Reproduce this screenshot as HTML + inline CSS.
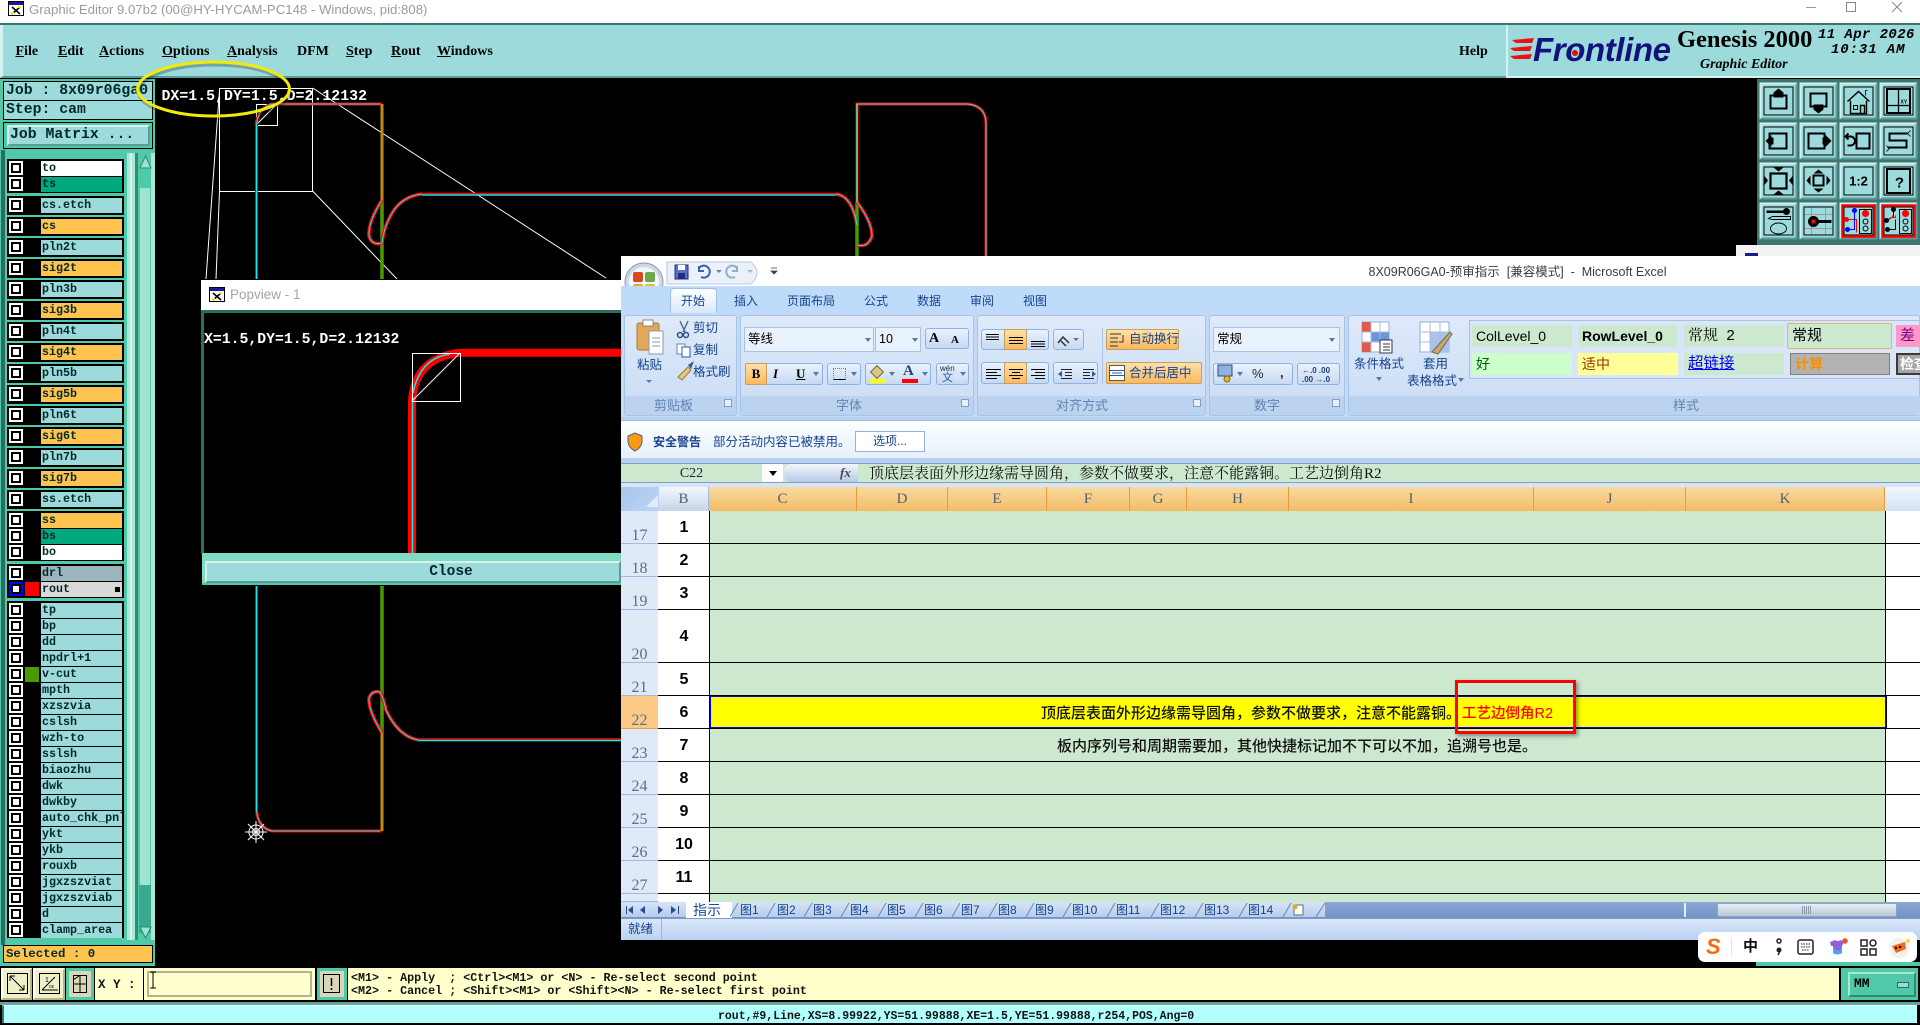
<!DOCTYPE html>
<html><head><meta charset="utf-8"><title>Graphic Editor</title>
<style>
html,body{margin:0;padding:0;width:1920px;height:1023px;overflow:hidden;background:#000}
div,span,b,svg{position:absolute;white-space:pre}
u,em{position:static}
body{font-family:"Liberation Sans","Noto Sans CJK SC",sans-serif;font-size:12px;color:#000}
.m{font-family:"Liberation Serif",serif;font-weight:bold;font-size:14px;top:42.500px;line-height:17px;color:#000}
.mono{font-family:"Liberation Mono",monospace;font-weight:bold}
.f{background:#000;left:7px;width:117px}
.y{left:0;width:124px;height:15px}
.y i{position:absolute;left:9px;top:0;width:14px;height:14px;background:#fff;box-sizing:border-box;padding:0}
.y i:before{content:"";position:absolute;left:2px;top:2px;width:10px;height:10px;background:#000}
.y i:after{content:"";position:absolute;left:4px;top:4px;width:6px;height:6px;background:#fff}
.y b{left:41px;width:80px;height:15px;padding-left:1px;overflow:hidden;font-family:"Liberation Mono",monospace;font-size:11.700px;line-height:15px;font-weight:bold;color:#03282a;background:#9ddadb}
.y b.o{background:#ffc44f}.y b.w{background:#fff}.y b.g{background:#00a880}
.grp{background:linear-gradient(#dfeafa,#c9dcf5);border:1px solid #a6c3e8;border-radius:3px;box-sizing:border-box;top:315px;height:101px}
.lab{top:396px;height:19px;background:#bcd3ef}
.gl{top:398px;line-height:16px;font-size:13px;color:#5f82b3}
.rb{color:#15428b;font-size:12px;line-height:16px}
.tab{top:293px;font-size:12px;line-height:16px;color:#15428b}
.btn{background:linear-gradient(#eaf2fd,#c6d9f2);border:1px solid #8db2e3;border-radius:3px;box-sizing:border-box}
.or{background:linear-gradient(#fde0a8,#fbb95f);border:1px solid #c9a05a;border-radius:2px;box-sizing:border-box}
.cb{background:#e9f1fc;border:1px solid #a9c3e6;box-sizing:border-box}
.st{background:#cce8cf;height:22px;line-height:22px;font-size:14px;box-sizing:border-box;padding-left:4px}
.ch{top:487px;height:24px;background:linear-gradient(#f9dba0,#f4bb66);border-right:1px solid #e89a3c;box-sizing:border-box;text-align:center;font-family:"Liberation Serif",serif;font-size:15px;line-height:24px;color:#4e5f72}
.rh{left:621px;width:37px;background:#dfe9f7;border-bottom:1px solid #9fbce0;box-sizing:border-box;font-family:"Liberation Serif",serif;font-size:16px;color:#5c6f85;text-align:center}
.rh span{left:0;width:37px;bottom:-2px;line-height:19px}
.n{left:659px;width:50px;text-align:center;font-weight:bold;font-size:16px;line-height:20px;color:#000;margin-top:1px}
.hl{left:658px;width:1262px;height:1px;background:#000}
.sh{top:903px;font-size:12px;line-height:15px;color:#15428b}
.tri{width:0;height:0;border:3px solid transparent;border-top:4px solid #55789f}
.dl{width:8px;height:8px;top:399px;border:1px solid #7f9fc9;box-sizing:border-box;background:#e6effb}
</style></head><body>

<!-- title bar -->
<div style="left:0;top:0;width:1920px;height:23px;background:#fff"></div>
<svg style="left:8px;top:1px" width="16" height="15" viewBox="0 0 16 15"><rect x=".5" y=".5" width="15" height="14" fill="#fff" stroke="#000"/><rect x="1" y="1" width="14" height="3" fill="#1a1a90"/><path d="M4 6l8 7M12 6l-8 7" stroke="#000" stroke-width="1.500"/><path d="M3 12h3M10 6h3" stroke="#ee0" stroke-width="2"/></svg>
<div style="left:29px;top:1px;line-height:18px;font-size:13.200px;color:#9b9b9b">Graphic Editor 9.07b2 (00@HY-HYCAM-PC148 - Windows, pid:808)</div>
<svg style="left:1800px;top:0" width="120" height="20" viewBox="0 0 120 20"><path d="M6 7.500h10" stroke="#999"/><rect x="46.500" y="2.500" width="9" height="9" fill="none" stroke="#888"/><path d="M92 2l10 10M102 2l-10 10" stroke="#888"/></svg>

<!-- menu panel -->
<div style="left:0;top:23px;width:1920px;height:2px;background:#3f7570"></div>
<div style="left:0;top:25px;width:1506px;height:53px;background:#9ddadb;border-left:3px solid #d6f2ee;border-bottom:2px solid #5d9b98;box-sizing:border-box"></div>
<div style="left:1506px;top:25px;width:2px;height:53px;background:#d6f2ee"></div>
<div class="m" style="left:15.500px"><u>F</u>ile</div>
<div class="m" style="left:58px"><u>E</u>dit</div>
<div class="m" style="left:99px"><u>A</u>ctions</div>
<div class="m" style="left:162px"><u>O</u>ptions</div>
<div class="m" style="left:227px"><u>A</u>nalysis</div>
<div class="m" style="left:297px">DFM</div>
<div class="m" style="left:346px"><u>S</u>tep</div>
<div class="m" style="left:391px"><u>R</u>out</div>
<div class="m" style="left:437px"><u>W</u>indows</div>
<div class="m" style="left:1459px">Help</div>

<!-- logo panel -->
<div style="left:1508px;top:25px;width:412px;height:53px;background:#9ddadb;border-bottom:2px solid #d6f2ee;box-sizing:border-box"></div>
<svg style="left:1510px;top:36px" width="30" height="28" viewBox="0 0 30 28"><path d="M2 4l22-2-2 5H6zM0 12l22-2-2 5H4zM0 20l22-2-2 5H4z" fill="#f01010"/></svg>
<div style="left:1533px;top:31px;font:italic bold 33px/38px 'Liberation Sans',sans-serif;color:#12127c;letter-spacing:-.4px">Frontline</div>
<svg style="left:1563px;top:41px" width="24" height="24"><circle cx="12" cy="12" r="3" fill="#e01010"/></svg>
<div style="left:1677px;top:25px;font:bold 24.500px/30px 'Liberation Serif',serif;color:#000">Genesis 2000</div>
<div style="left:1700px;top:56px;font:italic bold 14px/18px 'Liberation Serif',serif;color:#000">Graphic Editor</div>
<div style="left:1818px;top:27px;font:italic bold 14px/16px 'Liberation Mono',monospace;color:#000;letter-spacing:.4px">11 Apr 2026</div>
<div style="left:1831px;top:42px;font:italic bold 14px/16px 'Liberation Mono',monospace;color:#000;letter-spacing:.9px">10:31 AM</div>

<!-- canvas -->
<svg style="left:155px;top:79px" width="1605" height="890" viewBox="155 79 1605 890" fill="none">
<g stroke="#fff" stroke-width="1">
<rect x="219.500" y="88.500" width="93" height="103"/>
<rect x="256.500" y="104.500" width="21" height="21"/>
<path d="M256 125L277 104M219.500 90L206 279M219.500 191L216 279M312.600 191L397 279M312.600 88L606 278"/>
</g>
<path d="M256.500 125V810Q258 828 272 831H382" stroke="#ff0000" stroke-width="3"/>
<path d="M256 125Q258 108 272 104H382" stroke="#ff0000" stroke-width="3"/>
<path d="M382 104V200" stroke="#c08a10" stroke-width="3"/>
<path d="M382 200V300M382 560V733" stroke="#4a9a00" stroke-width="3.500"/>
<path d="M382 733V831" stroke="#c08a10" stroke-width="3"/>
<path d="M382 200Q368 222 369 236Q372 246 382 243Q384 225 394 210Q404 196 422 194" stroke="#ff0000" stroke-width="3.500"/>
<path d="M422 193.500H836" stroke="#ff0000" stroke-width="1.500"/>
<path d="M422 195H836" stroke="#19e6e6" stroke-width="1.500"/>
<path d="M836 194Q852 196 857 225" stroke="#ff0000" stroke-width="3.500"/>
<path d="M382 733Q368 710 369 698Q372 690 380 692Q384 700 386 710Q398 736 418 740" stroke="#ff0000" stroke-width="3.500"/>
<path d="M418 739H625" stroke="#ff0000" stroke-width="1.500"/>
<path d="M418 740.500H625" stroke="#19e6e6" stroke-width="1.500"/>
<path d="M857 202V104H968Q985 106 986 122V260" stroke="#ff0000" stroke-width="3"/>
<path d="M857 104V202" stroke="#c08a10" stroke-width="2"/>
<path d="M857 202V260" stroke="#4a9a00" stroke-width="3.500"/>
<path d="M857 202Q872 222 872 236Q868 248 857 245" stroke="#ff0000" stroke-width="3.500"/>
<g stroke="#19e6e6" stroke-width="1">
<path d="M256.500 125V810Q258 828 272 831H380M256.500 125Q258 108 272 104H380"/>
<path d="M382 200Q368 222 369 236Q372 246 382 243Q384 225 394 210Q404 196 422 194"/>
<path d="M836 194Q852 196 857 225"/>
<path d="M382 733Q368 710 369 698Q372 690 380 692Q384 700 386 710Q398 736 418 740"/>
<path d="M857 202V104H968Q985 106 986 122V260M857 202Q872 222 872 236Q868 248 857 245"/>
</g>
<g stroke="#fff" stroke-width="1"><circle cx="256" cy="832" r="7"/><circle cx="256" cy="832" r="3.500"/><path d="M256 821V843M245 832H267M248 824L264 840M264 824L248 840"/></g>
</svg>
<div class="mono" style="left:161.500px;top:88px;line-height:18px;font-size:14.900px;color:#fff;z-index:2">DX=1.5,DY=1.5,D=2.12132</div>

<!-- left panel -->
<div style="left:0;top:79px;width:155px;height:887px;background:#50c9a9"></div>
<div style="left:1px;top:150px;width:4px;height:795px;background:#2d6c62"></div>
<div style="left:3px;top:81px;width:150px;height:68px;background:#000"></div>
<div class="mono" style="left:4px;top:82px;width:148px;height:18px;background:#9ddadb;font-size:14.800px;line-height:18px;color:#03282a;padding-left:2px;box-sizing:border-box">Job : 8x09r06ga0</div>
<div class="mono" style="left:4px;top:101px;width:148px;height:18px;background:#9ddadb;font-size:14.800px;line-height:18px;color:#03282a;padding-left:2px;box-sizing:border-box">Step: cam</div>
<div style="left:3px;top:120px;width:150px;height:3px;background:#50c9a9"></div>
<div style="left:3px;top:122px;width:150px;height:27px;background:#50c9a9;border:1px solid #000;box-sizing:border-box"></div>
<div class="mono" style="left:7px;top:125px;width:143px;height:21px;background:#9ddadb;border:2px solid;border-color:#d6f2ee #5d9b98 #5d9b98 #d6f2ee;box-sizing:border-box;font-size:14.800px;line-height:17px;padding-left:1px;color:#03282a">Job Matrix ...</div>
<div style="left:127px;top:153px;width:8px;height:787px;background:#a9e8d6"></div>
<div style="left:130px;top:153px;width:2px;height:787px;background:#d2f4ea"></div>
<div style="left:135px;top:153px;width:3px;height:787px;background:#2f8a76"></div>
<div style="left:140px;top:188px;width:10px;height:697px;background:#9fe3d1"></div>
<div style="left:139px;top:885px;width:12px;height:48px;background:#3aa88d"></div>
<div style="left:151px;top:153px;width:4px;height:787px;background:#a9e8d6"></div>
<svg style="left:139px;top:153px" width="13" height="32"><path d="M6.500 3L1 15h11z" fill="#9fe3d1" stroke="#2f8a76"/></svg>
<svg style="left:139px;top:925px" width="13" height="16"><path d="M6.500 13L1 2h11z" fill="#9fe3d1" stroke="#2f8a76"/></svg>

<div class="f" style="top:159px;height:34px"></div>
<div class="f" style="top:196px;height:19px"></div><div class="f" style="top:217px;height:19px"></div><div class="f" style="top:238px;height:19px"></div><div class="f" style="top:259px;height:19px"></div><div class="f" style="top:280px;height:19px"></div><div class="f" style="top:301px;height:19px"></div><div class="f" style="top:322px;height:19px"></div><div class="f" style="top:343px;height:19px"></div><div class="f" style="top:364px;height:19px"></div><div class="f" style="top:385px;height:19px"></div><div class="f" style="top:406px;height:19px"></div><div class="f" style="top:427px;height:19px"></div><div class="f" style="top:448px;height:19px"></div><div class="f" style="top:469px;height:19px"></div><div class="f" style="top:490px;height:19px"></div>
<div class="f" style="top:511px;height:50px"></div>
<div class="f" style="top:564px;height:34px"></div>
<div class="f" style="top:601px;height:337px"></div>

<div class="y" style="top:161px"><i></i><b class="w">to</b></div>
<div class="y" style="top:177px"><i></i><b class="g">ts</b></div>
<div class="y" style="top:198px"><i></i><b>cs.etch</b></div>
<div class="y" style="top:219px"><i></i><b class="o">cs</b></div>
<div class="y" style="top:240px"><i></i><b>pln2t</b></div>
<div class="y" style="top:261px"><i></i><b class="o">sig2t</b></div>
<div class="y" style="top:282px"><i></i><b>pln3b</b></div>
<div class="y" style="top:303px"><i></i><b class="o">sig3b</b></div>
<div class="y" style="top:324px"><i></i><b>pln4t</b></div>
<div class="y" style="top:345px"><i></i><b class="o">sig4t</b></div>
<div class="y" style="top:366px"><i></i><b>pln5b</b></div>
<div class="y" style="top:387px"><i></i><b class="o">sig5b</b></div>
<div class="y" style="top:408px"><i></i><b>pln6t</b></div>
<div class="y" style="top:429px"><i></i><b class="o">sig6t</b></div>
<div class="y" style="top:450px"><i></i><b>pln7b</b></div>
<div class="y" style="top:471px"><i></i><b class="o">sig7b</b></div>
<div class="y" style="top:492px"><i></i><b>ss.etch</b></div>
<div class="y" style="top:513px"><i></i><b class="o">ss</b></div>
<div class="y" style="top:529px"><i></i><b class="g">bs</b></div>
<div class="y" style="top:545px"><i></i><b class="w">bo</b></div>
<div class="y" style="top:566px"><i></i><b style="background:#9cb4bc">drl</b></div>
<div class="y" style="top:582px"><i style="background:#00f"></i><b style="background:#d9d9d9">rout</b><div style="left:25px;top:0;width:14px;height:14px;background:#f00"></div><div style="left:115px;top:5px;width:5px;height:5px;background:#000;border:0 solid #000"></div></div>
<div class="y" style="top:603px"><i></i><b>tp</b></div>
<div class="y" style="top:619px"><i></i><b>bp</b></div>
<div class="y" style="top:635px"><i></i><b>dd</b></div>
<div class="y" style="top:651px"><i></i><b>npdrl+1</b></div>
<div class="y" style="top:667px"><i></i><b>v-cut</b><div style="left:25px;top:0;width:14px;height:15px;background:#4a9a00"></div></div>
<div class="y" style="top:683px"><i></i><b>mpth</b></div>
<div class="y" style="top:699px"><i></i><b>xzszvia</b></div>
<div class="y" style="top:715px"><i></i><b>cslsh</b></div>
<div class="y" style="top:731px"><i></i><b>wzh-to</b></div>
<div class="y" style="top:747px"><i></i><b>sslsh</b></div>
<div class="y" style="top:763px"><i></i><b>biaozhu</b></div>
<div class="y" style="top:779px"><i></i><b>dwk</b></div>
<div class="y" style="top:795px"><i></i><b>dwkby</b></div>
<div class="y" style="top:811px"><i></i><b>auto_chk_pnl</b></div>
<div class="y" style="top:827px"><i></i><b>ykt</b></div>
<div class="y" style="top:843px"><i></i><b>ykb</b></div>
<div class="y" style="top:859px"><i></i><b>rouxb</b></div>
<div class="y" style="top:875px"><i></i><b>jgxzszviat</b></div>
<div class="y" style="top:891px"><i></i><b>jgxzszviab</b></div>
<div class="y" style="top:907px"><i></i><b>d</b></div>
<div class="y" style="top:923px"><i></i><b>clamp_area</b></div>

<div class="mono" style="left:3px;top:945px;width:150px;height:18px;background:#ffc44f;border:1px solid #000;box-sizing:border-box;font-size:12.400px;line-height:16px;padding-left:2px;color:#03282a">Selected : 0</div>

<!-- yellow ellipse on top of panel -->
<svg style="left:125px;top:52px;z-index:3" width="180" height="76" viewBox="125 52 180 76" fill="none"><ellipse cx="213.500" cy="90" rx="76" ry="27" stroke="#00000040" stroke-width="3" transform="translate(1 2)"/><ellipse cx="213.500" cy="89" rx="76" ry="27" stroke="#f2ea0a" stroke-width="3"/></svg>

<!-- toolbar -->
<svg style="left:1757px;top:79px" width="163" height="166" viewBox="0 0 163 166">
<rect width="163" height="166" fill="#3f7570"/>
<defs><g id="b"><rect width="38" height="37" fill="#9ddadb"/><path d="M0 37V0H38L36 2H2V35Z" fill="#d2f1ee"/><path d="M0 37H38V0L36 2V35H2Z" fill="#5d9b98"/><rect x="4.500" y="4.500" width="29" height="28" fill="none" stroke="#000"/></g></defs>
<g transform="translate(2.500 3.500)"><use href="#b"/><rect x="11" y="13" width="16" height="13" fill="none" stroke="#000" stroke-width="2"/><path d="M19 6l5 4v5H14v-5z"/></g>
<g transform="translate(42.500 3.500)"><use href="#b"/><rect x="11" y="11" width="16" height="13" fill="none" stroke="#000" stroke-width="2"/><path d="M19 31l5-4v-5H14v5z"/></g>
<g transform="translate(82.500 3.500)"><use href="#b"/><path d="M8 19L19 9L30 19M11 18V31H27V18M21 31V23H25V31" fill="none" stroke="#000" stroke-width="1.400"/><rect x="14" y="23" width="4" height="4" fill="none" stroke="#000"/><path d="M26 13V8h2" fill="none" stroke="#000" stroke-width=".8"/></g>
<g transform="translate(122.500 3.500)"><use href="#b"/><rect x="7.500" y="6.500" width="23" height="24" fill="none" stroke="#000" stroke-width="2"/><path d="M19 6V30M7 23H31" stroke="#000" stroke-width="1.300"/><text x="21" y="21" font-family="Liberation Sans" font-size="5" font-weight="bold">XY</text></g>
<g transform="translate(2.500 43.500)"><use href="#b"/><rect x="10" y="11" width="17" height="15" fill="none" stroke="#000" stroke-width="2"/><path d="M6 18.500l6-6v12z"/><rect x="10" y="15" width="4" height="7"/></g>
<g transform="translate(42.500 43.500)"><use href="#b"/><rect x="9" y="11" width="16" height="15" fill="none" stroke="#000" stroke-width="2"/><path d="M32 18.500l-6-6v12z"/><rect x="23" y="15" width="4" height="7"/></g>
<g transform="translate(82.500 43.500)"><use href="#b"/><rect x="17" y="11" width="13" height="15" fill="none" stroke="#000" stroke-width="2"/><path d="M9 11L6 14L9 17M6 14H11A4.500 4.500 0 0 1 11 23H8" fill="none" stroke="#000" stroke-width="2"/></g>
<g transform="translate(122.500 43.500)"><use href="#b"/><path d="M28 11H10V18H27V25H8" fill="none" stroke="#000" stroke-width="2"/><path d="M31 8l-3 3 3 3M7 23l3 3-3 3" fill="none" stroke="#000" stroke-width=".8"/></g>
<g transform="translate(2.500 83.500)"><use href="#b"/><rect x="11" y="11" width="16" height="15" fill="none" stroke="#000" stroke-width="2.200"/><path d="M14 5h10l-5 4zM14 32h10l-5-4zM4.500 13v10l4-5zM33.500 13v10l-4-5z"/></g>
<g transform="translate(42.500 83.500)"><use href="#b"/><rect x="14" y="13" width="10" height="10" fill="none" stroke="#000" stroke-width="2"/><path d="M19 7l-5 4h10zM19 30l-5-4h10zM7 18l4-5v10zM31 18l-4-5v10z"/></g>
<g transform="translate(82.500 83.500)"><use href="#b"/><text x="19" y="23" text-anchor="middle" font-family="Liberation Sans" font-size="13" font-weight="bold">1:2</text></g>
<g transform="translate(122.500 83.500)"><use href="#b"/><rect x="7.500" y="6.500" width="23" height="24" fill="none" stroke="#000" stroke-width="2"/><text x="20" y="25" text-anchor="middle" font-family="Liberation Sans" font-size="15" font-weight="bold">?</text></g>
<g transform="translate(2.500 123.500)"><use href="#b"/><rect x="7" y="8" width="18" height="2.500"/><circle cx="27" cy="9" r="3.500"/><path d="M9 16L13 14H31V17H13Z" fill="none" stroke="#000" stroke-width=".9"/><ellipse cx="19" cy="26" rx="8" ry="5.500" fill="none" stroke="#000" stroke-width=".9"/></g>
<g transform="translate(42.500 123.500)"><use href="#b"/><path d="M5 12H33M5 26H33M12 5V32M26 5V32" stroke="#b58f8f"/><circle cx="14" cy="19" r="5.500"/><rect x="18" y="17.500" width="14" height="3"/><rect x="12" y="17" width="4" height="4" fill="#e01010"/></g>
<g transform="translate(82.500 123.500)"><use href="#b"/><rect x="3" y="3" width="32" height="31" fill="none" stroke="#f00" stroke-width="2.500"/><rect x="20" y="7" width="12" height="24" fill="none" stroke="#000"/><circle cx="26" cy="11" r="3.500" fill="#f00"/><circle cx="26" cy="19" r="2.500" fill="none" stroke="#000"/><circle cx="26" cy="26" r="2.500" fill="none" stroke="#000"/><path d="M7 17H17V30" fill="none" stroke="#f00"/><path d="M15 8V27H9" fill="none" stroke="#00f"/><circle cx="15" cy="8" r="2.500" fill="#00f"/><circle cx="8" cy="27" r="2.500" fill="#00f"/><circle cx="7" cy="17" r="2.500" fill="#f00"/></g>
<g transform="translate(122.500 123.500)"><use href="#b"/><rect x="3" y="3" width="32" height="31" fill="none" stroke="#f00" stroke-width="2.500"/><rect x="20" y="7" width="12" height="24" fill="none" stroke="#000"/><circle cx="26" cy="11" r="3.500" fill="#f00"/><circle cx="26" cy="19" r="2.500" fill="none" stroke="#000"/><circle cx="26" cy="26" r="2.500" fill="none" stroke="#000"/><path d="M14 8V14M7 18L14 14M16 27V17M9 27H16" fill="none" stroke="#000"/><circle cx="14" cy="7" r="2.500"/><circle cx="7" cy="18" r="2.500"/><circle cx="8" cy="27" r="2.500"/><path d="M11 15h5v-2M13 13v2M16 13v2" stroke="#f00" fill="none"/></g>
</svg>
<div style="left:1736px;top:245px;width:184px;height:11px;background:#f3f3f3"></div>
<div style="left:1745px;top:253px;width:13px;height:3px;background:#1a1a90"></div>

<!-- Popview -->
<div style="left:200px;top:279px;width:421px;height:307px;background:#000"></div>
<div style="left:201px;top:280px;width:420px;height:30px;background:#fff"></div>
<svg style="left:209px;top:287px" width="16" height="15" viewBox="0 0 16 15"><rect x=".5" y=".5" width="15" height="14" fill="#fff" stroke="#000"/><rect x="1" y="1" width="14" height="3" fill="#1a1a90"/><path d="M4 6l8 7M12 6l-8 7" stroke="#000" stroke-width="1.500"/><path d="M3 12h3M10 6h3" stroke="#ee0" stroke-width="2"/></svg>
<div style="left:230px;top:286px;font-size:13.500px;line-height:18px;color:#a3a3a3">Popview - 1</div>
<div style="left:201px;top:310px;width:420px;height:3px;background:#2d6c62"></div>
<div style="left:201px;top:310px;width:3px;height:243px;background:#2d6c62"></div>
<div class="mono" style="left:204px;top:331px;line-height:18px;font-size:14.800px;color:#fff">X=1.5,DY=1.5,D=2.12132</div>
<svg style="left:204px;top:313px" width="417" height="240" viewBox="204 313 417 240" fill="none">
<path d="M412 553V402Q414 358 460 352.700H621" stroke="#f00" stroke-width="8"/>
<path d="M412.500 553V396" stroke="#19e6e6" stroke-width="1.500"/>
<path d="M413 393Q420 358 450 354" stroke="#19e6e6" stroke-width="1.500"/>
<rect x="412.500" y="353.500" width="48" height="48" stroke="#fff"/>
<path d="M412 401L460 353" stroke="#fff"/>
</svg>
<div style="left:202px;top:553px;width:419px;height:32px;background:#7fdcc2"></div>
<div class="mono" style="left:205px;top:561px;width:416px;height:22px;background:#9ddadb;border:2px solid;border-color:#d6f2ee #5d9b98 #5d9b98 #d6f2ee;box-sizing:border-box;font-size:14.500px;line-height:18px;text-align:center;padding-left:76px;color:#03282a">Close</div>
<div style="left:202px;top:583px;width:419px;height:2px;background:#50c9a9"></div>

<!-- Excel -->
<div style="left:621px;top:256px;width:1299px;height:684px;background:#fff"></div>
<svg style="left:621px;top:256px" width="170" height="52" viewBox="0 0 170 52">
<path d="M46 6H130Q142 17 130 28H46Z" fill="#eaf1fa" stroke="#b8c9de"/>
<rect x="0" y="30" width="170" height="22" fill="#bfdbfa"/>
<circle cx="23" cy="26" r="19" fill="#cdd8e6" stroke="#8a97a8"/>
<circle cx="23" cy="26" r="15" fill="#f4f6fa"/>
<rect x="12" y="16" width="10" height="10" rx="2" fill="#d84a18"/><rect x="24" y="16" width="10" height="10" rx="2" fill="#6aa84a"/><rect x="12" y="28" width="10" height="9" rx="2" fill="#f0a818"/><rect x="24" y="28" width="10" height="9" rx="2" fill="#e8c020"/>
<rect x="54" y="9" width="13" height="14" fill="#5a6fc8" stroke="#1c2f78"/><rect x="57" y="9" width="7" height="5" fill="#fff"/><rect x="57" y="17" width="7" height="6" fill="#1c2f78"/>
<path d="M78 12a6 6 0 1 1 2 9M78 10v5h5" fill="none" stroke="#3a62b0" stroke-width="2"/><path d="M95 14l3 3 3-3z" fill="#6a7f9a"/>
<path d="M118 12a6 6 0 1 0-2 9M118 10v5h-5" fill="none" stroke="#8fb0c8" stroke-width="2" transform="translate(-2 0)"/><path d="M126 14l3 3 3-3z" fill="#a8b8c8"/>
<path d="M150 12h6M150 15l3 3 3-3z" stroke="#345" fill="#345" stroke-width=".8"/>
</svg>
<div style="left:1368.500px;top:264px;font-size:12.500px;line-height:16px;color:#3d3d3d;font-family:'Liberation Sans','Noto Sans CJK SC',sans-serif">8X09R06GA0-预审指示  [兼容模式]  -  Microsoft Excel</div>
<div style="left:621px;top:286px;width:1299px;height:26px;background:#bfdbfa"></div>
<div style="left:621px;top:312px;width:1299px;height:105px;background:#c4d9f5"></div>
<div style="left:670px;top:288px;width:47px;height:25px;background:linear-gradient(#fff,#d9e8fb);border:1px solid #9ebfe8;border-bottom:0;border-radius:4px 4px 0 0;box-sizing:border-box"></div>
<div class="tab" style="left:681px">开始</div><div class="tab" style="left:734px">插入</div><div class="tab" style="left:787px">页面布局</div><div class="tab" style="left:864px">公式</div><div class="tab" style="left:917px">数据</div><div class="tab" style="left:970px">审阅</div><div class="tab" style="left:1023px">视图</div>

<div class="grp" style="left:624px;width:113px"></div><div class="lab" style="left:625px;width:111px"></div>
<div class="grp" style="left:740px;width:234px"></div><div class="lab" style="left:741px;width:232px"></div>
<div class="grp" style="left:977px;width:229px"></div><div class="lab" style="left:978px;width:227px"></div>
<div class="grp" style="left:1209px;width:136px"></div><div class="lab" style="left:1210px;width:134px"></div>
<div class="grp" style="left:1348px;width:572px"></div><div class="lab" style="left:1349px;width:571px"></div>
<div class="gl" style="left:654px">剪贴板</div><div class="gl" style="left:836px">字体</div><div class="gl" style="left:1056px">对齐方式</div><div class="gl" style="left:1254px">数字</div><div class="gl" style="left:1673px">样式</div>
<div class="dl" style="left:724px"></div><div class="dl" style="left:961px"></div><div class="dl" style="left:1193px"></div><div class="dl" style="left:1332px"></div>

<svg style="left:632px;top:318px" width="90" height="70" viewBox="0 0 90 70"><rect x="5" y="5" width="22" height="27" rx="2" fill="#e0a858" stroke="#a87a30"/><rect x="11" y="2" width="10" height="6" fill="#fff" stroke="#888"/><path d="M17 13h14v23H17z" fill="#fff" stroke="#8a9ab0"/><path d="M20 20h8M20 24h8M20 28h8" stroke="#8a9ab0"/><path d="M14 62l3 3 3-3z" fill="#5a7ba8"/>
<path d="M48 3l5 11M56 3l-5 11" stroke="#5a6e8a" stroke-width="1.500"/><circle cx="48" cy="17" r="2.500" fill="none" stroke="#2a4a8a" stroke-width="1.500"/><circle cx="54" cy="17" r="2.500" fill="none" stroke="#2a4a8a" stroke-width="1.500"/>
<rect x="45" y="26" width="8" height="10" fill="#fff" stroke="#6a86aa"/><rect x="50" y="29" width="8" height="10" fill="#fff" stroke="#2a5aa0"/>
<path d="M46 59l10-10 3 3-9 10z" fill="#e8c878" stroke="#8a7a50"/><path d="M56 47l6-4-3 8z" fill="#3a5a98"/></svg>
<div class="rb" style="left:637px;top:357px;font-size:12.500px">粘贴</div>
<div class="rb" style="left:693px;top:320px;font-size:12.500px">剪切</div><div class="rb" style="left:693px;top:342px;font-size:12.500px">复制</div><div class="rb" style="left:693px;top:364px;font-size:12.500px">格式刷</div>

<!-- font group -->
<div class="cb" style="left:744px;top:327px;width:130px;height:25px;line-height:23px;font-size:12.500px;padding-left:3px">等线<span class="tri" style="left:120px;top:10px"></span></div>
<div class="cb" style="left:875px;top:327px;width:46px;height:25px;line-height:23px;font-size:12.500px;padding-left:3px">10<span class="tri" style="left:36px;top:10px"></span></div>
<div class="btn" style="left:925px;top:328px;width:44px;height:21px;font:bold 14px/20px 'Liberation Serif',serif;padding-left:3px">A <span style="font-size:11px;left:25px;top:2px;line-height:18px">A</span></div>
<div class="btn" style="left:745px;top:363px;width:78px;height:22px"></div>
<div class="or" style="left:745px;top:363px;width:22px;height:22px;text-align:center;font:bold 13px/20px 'Liberation Serif',serif">B</div>
<div style="left:773px;top:365px;font:italic bold 13px/18px 'Liberation Serif',serif">I</div>
<div style="left:796px;top:365px;font:bold 13px/18px 'Liberation Serif',serif"><u>U</u></div>
<div class="tri" style="left:813px;top:372px"></div>
<div class="btn" style="left:827px;top:363px;width:34px;height:22px"></div>
<div style="left:833px;top:368px;width:13px;height:12px;border:1px dotted #6a7f9a;box-sizing:border-box;border-bottom:1px solid #000"></div>
<div class="tri" style="left:851px;top:372px"></div>
<div class="btn" style="left:865px;top:363px;width:66px;height:22px"></div>
<div style="left:870px;top:379px;width:15px;height:4px;background:#ff0"></div>
<div style="left:872px;top:367px;width:10px;height:10px;background:#d8c88a;border:1px solid #7a6a3a;box-sizing:border-box;transform:rotate(45deg)"></div>
<div class="tri" style="left:889px;top:372px"></div>
<div style="left:903px;top:363px;font:bold 15px/17px 'Liberation Serif',serif;color:#2a3f7a">A</div>
<div style="left:902px;top:379px;width:16px;height:4px;background:#f00"></div>
<div class="tri" style="left:922px;top:372px"></div>
<div class="btn" style="left:936px;top:363px;width:33px;height:22px"></div>
<div style="left:940px;top:365px;font-size:8px;line-height:8px;color:#223">wén</div>
<div style="left:942px;top:372px;font-size:11px;line-height:12px;color:#2a5aa0">文</div>
<div class="tri" style="left:960px;top:372px"></div>

<!-- align group -->
<div class="btn" style="left:981px;top:329px;width:68px;height:21px"></div>
<div class="or" style="left:1004px;top:329px;width:23px;height:21px"></div>
<div class="btn" style="left:1053px;top:329px;width:31px;height:21px"></div>
<div class="btn" style="left:981px;top:362px;width:68px;height:22px"></div>
<div class="or" style="left:1004px;top:362px;width:23px;height:22px"></div>
<div class="btn" style="left:1053px;top:362px;width:45px;height:22px"></div>
<div style="left:1102px;top:328px;width:1px;height:56px;background:#a9c3e6"></div>
<svg style="left:981px;top:329px" width="125" height="56" viewBox="0 0 125 56" stroke="#000" fill="none">
<path d="M5 5.500h13M5 8h13M5 10.500h13"/>
<path d="M28 8.500h14M28 11.500h14M28 14.500h14"/>
<path d="M50 12.500h14M50 15h14M50 17.500h14"/>
<path d="M5 40.500h15M5 43.500h11M5 46.500h15M5 49.500h11"/>
<path d="M28 40.500h14M31 43.500h8M28 46.500h14M31 49.500h8"/>
<path d="M50 40.500h14M54 43.500h10M50 46.500h14M54 49.500h10"/>
<path d="M77 14l5-6 6 6M80 12l5 5" stroke="#333" stroke-width="1.500"/><path d="M92 9l3 3 3-3z" fill="#55789f" stroke="none"/>
<path d="M80 40.500h11M84 43.500h7M84 46.500h7M80 49.500h11" stroke="#222"/><path d="M77 45l4-3v6z" fill="#2a5aa0" stroke="none"/>
<path d="M102 40.500h11M102 43.500h7M102 46.500h7M102 49.500h11" stroke="#222"/><path d="M115 45l-4-3v6z" fill="#2a5aa0" stroke="none"/>
</svg>
<div class="or" style="left:1106px;top:329px;width:73px;height:21px;color:#15428b;font-size:12.500px;line-height:19px;padding-left:22px">自动换行</div>
<svg style="left:1109px;top:332px" width="18" height="16"><path d="M1 2h11M1 6h8M1 10h8M1 14h8M14 3v7h-4" fill="none" stroke="#334"/></svg>
<div class="or" style="left:1106px;top:362px;width:96px;height:22px;color:#15428b;font-size:12.500px;line-height:20px;padding-left:22px">合并后居中</div>
<svg style="left:1109px;top:365px" width="16" height="16"><rect x=".5" y=".5" width="15" height="15" fill="#fff" stroke="#556"/><path d="M1 5.500h14M1 10.500h14M3 8h10" stroke="#2a5aa0"/></svg>

<!-- number -->
<div class="cb" style="left:1213px;top:327px;width:127px;height:25px;line-height:23px;font-size:12.500px;padding-left:3px">常规<span class="tri" style="left:115px;top:10px"></span></div>
<div class="btn" style="left:1213px;top:363px;width:80px;height:22px"></div>
<div class="btn" style="left:1297px;top:363px;width:43px;height:22px;font:bold 8px/9px 'Liberation Sans',sans-serif;color:#1c3f7a;padding:2px 0 0 4px">←.0 .00<br>.00 →.0</div>
<svg style="left:1217px;top:364px" width="20" height="20"><rect x="1" y="1" width="14" height="11" fill="#8fb2e0" stroke="#2a4a8a"/><circle cx="10" cy="15" r="3" fill="#e8b820" stroke="#8a6a10"/></svg>
<div class="tri" style="left:1237px;top:372px"></div>
<div style="left:1252px;top:365px;font:13px/18px 'Liberation Sans',sans-serif;color:#223">%</div>
<div style="left:1280px;top:364px;font:bold 13px/18px 'Liberation Sans',sans-serif;color:#223">,</div>

<!-- cond / table -->
<svg style="left:1360px;top:320px" width="95" height="36" viewBox="0 0 95 36">
<rect x="2" y="2" width="27" height="30" fill="#fff" stroke="#8db2e3"/><rect x="2" y="2" width="9" height="10" fill="#e2584a"/><rect x="11" y="12" width="18" height="10" fill="#6a96dc"/><rect x="2" y="22" width="9" height="10" fill="#e2584a"/><path d="M2 12h27M2 22h27M11 2v30M20 2v30" stroke="#a8bcd8"/><rect x="20" y="20" width="12" height="13" fill="#fff" stroke="#334"/><path d="M23 24h7M23 27h7M23 30h7" stroke="#334"/>
<rect x="60" y="2" width="29" height="30" fill="#fff" stroke="#8db2e3"/><rect x="70" y="12" width="19" height="20" fill="#a8c4ee"/><path d="M60 12h29M60 22h29M70 2v30M80 2v30" stroke="#a8bcd8"/><path d="M72 32l18-20 2 2-14 20z" fill="#c8a870" stroke="#7a6a4a"/></svg>
<div class="rb" style="left:1354px;top:356px;font-size:12.500px">条件格式</div>
<div class="rb" style="left:1423px;top:356px;font-size:12.500px">套用</div>
<div class="rb" style="left:1407px;top:373px;font-size:12.500px">表格格式</div>
<div class="tri" style="left:1376px;top:377px"></div>
<div class="tri" style="left:1458px;top:378px"></div>

<!-- styles -->
<div style="left:1469px;top:320px;width:451px;height:59px;background:#d8e6f8;border:1px solid #a9c3e6;box-sizing:border-box"></div>
<div class="st" style="left:1472px;top:325px;width:100px">ColLevel_0</div>
<div class="st" style="left:1578px;top:325px;width:100px;font-weight:bold">RowLevel_0</div>
<div class="st" style="left:1684px;top:325px;width:100px;font-size:15px;font-family:'Liberation Sans','Noto Serif CJK SC',serif">常规  2</div>
<div class="st" style="left:1787px;top:323px;width:105px;height:26px;line-height:24px;font-size:15px;border:1.500px solid #eeb35a;border-radius:2px">常规</div>
<div class="st" style="left:1896px;top:325px;width:24px;background:#ff99cc;color:#800080;font-size:15px">差</div>
<div class="st" style="left:1472px;top:353px;width:100px;background:#ccffcc;color:#006100">好</div>
<div class="st" style="left:1578px;top:353px;width:100px;background:#ffff99;color:#993300">适中</div>
<div class="st" style="left:1684px;top:353px;width:100px;color:#0000ff;font-size:15.500px"><u>超链接</u></div>
<div class="st" style="left:1790px;top:353px;width:100px;background:#b3b3b3;border:1px solid #7f7f7f;color:#fa8c00;font-weight:bold;line-height:20px">计算</div>
<div class="st" style="left:1896px;top:353px;width:24px;background:#a5a5a5;border:2px solid #3a3a3a;border-right:0;color:#fff;font-weight:bold;line-height:18px;padding-left:2px;overflow:hidden">检查</div>

<!-- security bar -->
<div style="left:621px;top:417px;width:1299px;height:46px;background:#b8d0ef"></div>
<div style="left:621px;top:420px;width:1299px;height:37px;background:linear-gradient(#fff,#e4f0fc);border-top:1px solid #9fbde4"></div>
<svg style="left:627px;top:432px" width="16" height="20"><path d="M8 1L15 4V10Q14 16 8 19Q2 16 1 10V4Z" fill="#f89a14" stroke="#55606e"/></svg>
<div style="left:653px;top:434px;font-weight:bold;font-size:12px;line-height:16px;color:#15428b">安全警告</div>
<div style="left:713px;top:434px;font-size:12.500px;line-height:16px;color:#15428b">部分活动内容已被禁用。</div>
<div style="left:855px;top:431px;width:70px;height:21px;background:#fff;border:1px solid #8db2e3;box-sizing:border-box;text-align:center;line-height:19px;color:#15428b">选项...</div>

<!-- formula bar -->
<div style="left:621px;top:463px;width:1299px;height:20px;background:#cce8cf;border-top:1px solid #7f9fc9;border-bottom:1px solid #7f9fc9;box-sizing:border-box"></div>
<div style="left:621px;top:465px;width:141px;text-align:center;font-family:'Liberation Serif',serif;font-size:14px;line-height:18px;color:#223">C22</div>
<div style="left:762px;top:464px;width:21px;height:18px;background:#fff"></div>
<div style="left:769px;top:471px;width:0;height:0;border:4px solid transparent;border-top:5px solid #000"></div>
<div style="left:783px;top:464px;width:75px;height:18px;background:linear-gradient(#f4f7fc,#b5c9e4);border-radius:9px 0 0 9px"></div>
<div style="left:840px;top:464px;font:italic bold 13px/18px 'Liberation Serif',serif;color:#445">fx</div>
<div style="left:869px;top:465px;font-family:'Liberation Serif','Noto Serif CJK SC',serif;font-size:15px;line-height:18px;color:#111">顶底层表面外形边缘需导圆角，参数不做要求，注意不能露铜。工艺边倒角R2</div>
<div style="left:621px;top:483px;width:1299px;height:4px;background:#d6e4f6"></div>

<!-- columns -->
<div style="left:621px;top:487px;width:38px;height:24px;background:linear-gradient(135deg,#a8c6ee,#bfd4f2)"></div>
<div style="left:646px;top:495px;width:0;height:0;border-left:12px solid transparent;border-bottom:12px solid #e4ecf8"></div>
<div class="ch" style="left:659px;width:50px;background:linear-gradient(#f4f7fc,#c5d5ea);border-right:1px solid #9fbce0">B</div>
<div class="ch" style="left:709px;width:148px">C</div><div class="ch" style="left:857px;width:91px">D</div><div class="ch" style="left:948px;width:99px">E</div><div class="ch" style="left:1047px;width:83px">F</div><div class="ch" style="left:1130px;width:57px">G</div><div class="ch" style="left:1187px;width:102px">H</div><div class="ch" style="left:1289px;width:245px">I</div><div class="ch" style="left:1534px;width:152px">J</div><div class="ch" style="left:1686px;width:199px">K</div>
<div style="left:1885px;top:487px;width:35px;height:24px;background:linear-gradient(#f4f7fc,#d5e2f3)"></div>

<!-- grid -->
<div style="left:710px;top:511px;width:1175px;height:391px;background:#cce8cf"></div>
<div style="left:709px;top:511px;width:1px;height:391px;background:#000"></div>
<div style="left:1885px;top:511px;width:1px;height:391px;background:#000"></div>
<div class="hl" style="top:543px"></div><div class="hl" style="top:576px"></div><div class="hl" style="top:609px"></div><div class="hl" style="top:662px"></div><div class="hl" style="top:695px"></div><div class="hl" style="top:728px"></div><div class="hl" style="top:761px"></div><div class="hl" style="top:794px"></div><div class="hl" style="top:827px"></div><div class="hl" style="top:860px"></div><div class="hl" style="top:893px"></div>
<div class="rh" style="top:511px;height:33px"><span>17</span></div>
<div class="rh" style="top:544px;height:33px"><span>18</span></div>
<div class="rh" style="top:577px;height:33px"><span>19</span></div>
<div class="rh" style="top:610px;height:53px"><span>20</span></div>
<div class="rh" style="top:663px;height:33px"><span>21</span></div>
<div class="rh" style="top:696px;height:33px;background:#fbcb85;border-bottom:1px solid #f0a040"><span>22</span></div>
<div class="rh" style="top:729px;height:33px"><span>23</span></div>
<div class="rh" style="top:762px;height:33px"><span>24</span></div>
<div class="rh" style="top:795px;height:33px"><span>25</span></div>
<div class="rh" style="top:828px;height:33px"><span>26</span></div>
<div class="rh" style="top:861px;height:33px"><span>27</span></div>
<div class="rh" style="top:894px;height:8px"></div>
<div class="n" style="top:517px">1</div><div class="n" style="top:550px">2</div><div class="n" style="top:583px">3</div><div class="n" style="top:626px">4</div><div class="n" style="top:669px">5</div><div class="n" style="top:702px">6</div><div class="n" style="top:735px">7</div><div class="n" style="top:768px">8</div><div class="n" style="top:801px">9</div><div class="n" style="top:834px">10</div><div class="n" style="top:867px">11</div>
<div style="left:709px;top:695px;width:1178px;height:34px;background:#000"></div>
<div style="left:710px;top:696px;width:1176px;height:32px;background:#ff0;border:1px solid #00f;box-sizing:border-box"></div>
<div style="left:1041px;top:704px;font-size:15px;font-weight:500;line-height:20px;color:#111;font-family:'Liberation Sans','Noto Sans CJK SC',sans-serif">顶底层表面外形边缘需导圆角，参数不做要求，注意不能露铜。</div>
<div style="left:1462px;top:704px;font-size:14.500px;font-weight:500;line-height:20px;color:#f00;font-family:'Liberation Sans','Noto Sans CJK SC',sans-serif">工艺边倒角R2</div>
<div style="left:1057px;top:737px;font-size:15px;font-weight:500;line-height:20px;color:#111;font-family:'Liberation Sans','Noto Sans CJK SC',sans-serif">板内序列号和周期需要加，其他快捷标记加不下可以不加，追溯号也是。</div>
<div style="left:1455px;top:680px;width:121px;height:54px;border:3px solid #f00;box-sizing:border-box;box-shadow:2px 2px 4px #0006"></div>

<!-- sheet tabs -->
<div style="left:621px;top:902px;width:1299px;height:16px;background:linear-gradient(#89a8d6,#7393c4)"></div>
<div style="left:621px;top:902px;width:704px;height:15px;background:linear-gradient(#d6e4f7,#b6cdec)"></div>
<svg style="left:625px;top:905px" width="60" height="10" fill="#2a4a8a"><path d="M1 1h1v8H1zM8 1L3 5l5 4zM20 1l-5 4 5 4zM33 1l5 4-5 4zM46 1l5 4-5 4zM53 1h1v8h-1z"/></svg>
<div style="left:686px;top:902px;width:46px;height:16px;background:#fff"></div>
<div style="left:693px;top:902px;font-size:14px;line-height:16px;color:#1a4a9a">指示</div>
<svg style="left:730px;top:902px" width="600" height="16" fill="none" stroke="#6a86b0"><path d="M0 15L8 1M37 15L45 1M74 15L82 1M111 15L119 1M148 15L156 1M185 15L193 1M222 15L230 1M259 15L267 1M296 15L304 1M333 15L341 1M377 15L385 1M421 15L429 1M465 15L473 1M509 15L517 1M553 15L561 1M595 1L586 15"/></svg>
<div class="sh" style="left:740px">图1</div><div class="sh" style="left:777px">图2</div><div class="sh" style="left:813px">图3</div><div class="sh" style="left:850px">图4</div><div class="sh" style="left:887px">图5</div><div class="sh" style="left:924px">图6</div><div class="sh" style="left:961px">图7</div><div class="sh" style="left:998px">图8</div><div class="sh" style="left:1035px">图9</div><div class="sh" style="left:1072px">图10</div><div class="sh" style="left:1116px">图11</div><div class="sh" style="left:1160px">图12</div><div class="sh" style="left:1204px">图13</div><div class="sh" style="left:1248px">图14</div>
<svg style="left:1292px;top:904px" width="14" height="12"><rect x="2" y="1" width="9" height="10" fill="#fff" stroke="#5a6a8a"/><circle cx="3" cy="3" r="2.500" fill="#e8a820"/></svg>
<div style="left:1684px;top:903px;width:2px;height:14px;background:#e6eef9"></div>
<div style="left:1717px;top:903px;width:180px;height:14px;background:linear-gradient(#e8edf3,#b9c6d6);border:1px solid #8fa4bf;box-sizing:border-box"></div>
<div style="left:1802px;top:906px;width:9px;height:8px;background:repeating-linear-gradient(90deg,#8a98aa 0 1px,transparent 1px 2px)"></div>
<div style="left:621px;top:918px;width:1299px;height:22px;background:linear-gradient(#d9e7fa,#bad2f0);border-top:1px solid #7e9cc7;box-sizing:border-box"></div>
<div style="left:628px;top:921px;font-size:12.500px;line-height:16px;color:#15428b">就绪</div>
<div style="left:661px;top:919px;width:1px;height:21px;background:#9ab7de"></div>

<!-- bottom bar -->
<div style="left:0;top:966px;width:1920px;height:36px;background:#000"></div>
<div style="left:1756px;top:962px;width:164px;height:4px;background:#50c9a9"></div>
<div style="left:1px;top:968px;width:31px;height:32px;background:#f0f0c8;border:2px solid;border-color:#ffffe6 #b5b58c #b5b58c #ffffe6;box-sizing:border-box"></div>
<div style="left:33px;top:968px;width:32px;height:32px;background:#f0f0c8;border:2px solid;border-color:#ffffe6 #b5b58c #b5b58c #ffffe6;box-sizing:border-box"></div>
<div style="left:66px;top:968px;width:28px;height:32px;background:#d8d8b8;border:3px solid #50c9a9;box-sizing:border-box"></div>
<svg style="left:0;top:968px" width="100" height="32" fill="none" stroke="#000"><rect x="7.500" y="5.500" width="20" height="20"/><path d="M10 8L24 22M10 8v5M10 8h5M24 22v-5M24 22h-5"/><rect x="39.500" y="5.500" width="20" height="20"/><path d="M42 22L55 9M42 22h16"/><text x="45" y="14" font-family="Liberation Sans" font-size="7" fill="#000" stroke="none">1</text><text x="49" y="20" font-family="Liberation Sans" font-size="5" fill="#000" stroke="none">oc</text><rect x="73.500" y="7.500" width="13" height="17"/><path d="M80 8V24M74 16H86M73 12L79 8"/></svg>
<div style="left:95px;top:968px;width:48px;height:32px;background:#ffffcf"></div>
<div class="mono" style="left:98px;top:977px;font-size:12.500px;line-height:16px;color:#111">X Y :</div>
<div style="left:144px;top:968px;width:171px;height:32px;background:#ffffcf"></div>
<div style="left:147px;top:971px;width:165px;height:26px;border:2px solid #b5b58c;box-sizing:border-box"></div>
<svg style="left:148px;top:971px" width="10" height="20"><path d="M2 1h6M5 1V17M2 17h6" stroke="#000" fill="none"/></svg>
<div style="left:317px;top:968px;width:30px;height:32px;background:#d8d8b8;border:3px solid #50c9a9;box-sizing:border-box"></div>
<svg style="left:323px;top:974px" width="18" height="20"><rect x=".5" y=".5" width="16" height="18" fill="none" stroke="#000"/><path d="M8.500 4V12M8.500 14V16" stroke="#000" stroke-width="1.500"/></svg>
<div style="left:348px;top:968px;width:1491px;height:32px;background:#ffffcc"></div>
<div class="mono" style="left:351px;top:972px;font-size:11.700px;line-height:13px;color:#111;font-weight:bold">&lt;M1&gt; - Apply  ; &lt;Ctrl&gt;&lt;M1&gt; or &lt;N&gt; - Re-select second point
&lt;M2&gt; - Cancel ; &lt;Shift&gt;&lt;M1&gt; or &lt;Shift&gt;&lt;N&gt; - Re-select first point</div>
<div style="left:1841px;top:968px;width:77px;height:32px;background:#50c9a9"></div>
<div class="mono" style="left:1848px;top:972px;width:68px;height:25px;background:#50c9a9;border:2px solid;border-color:#a9e8d6 #2d8a76 #2d8a76 #a9e8d6;box-sizing:border-box;font-size:13px;line-height:20px;padding-left:4px;color:#000">MM</div>
<div style="left:1897px;top:982px;width:12px;height:6px;background:#9ddadb;border:1px solid #2d6c62;box-sizing:border-box"></div>

<!-- status bar -->
<div style="left:0;top:1002px;width:1920px;height:3px;background:#6ea39d"></div>
<div style="left:2px;top:1005px;width:1915px;height:18px;background:#b2ffff;border-left:2px solid #3f7570;border-top:1px solid #e8ffff;box-sizing:border-box"></div>
<div class="mono" style="left:718px;top:1009px;font-size:11.500px;line-height:16px;color:#111">rout,#9,Line,XS=8.99922,YS=51.99888,XE=1.5,YE=51.99888,r254,POS,Ang=0</div>

<!-- IME bar -->
<div style="left:1698px;top:932px;width:219px;height:30px;background:#fff;border-radius:7px"></div>
<div style="left:1706px;top:932px;font:italic bold 22px/30px 'Liberation Sans',sans-serif;color:#f56a10">S</div>
<div style="left:1731px;top:938px;width:1px;height:18px;background:#e5e5e5"></div>
<div style="left:1743px;top:937px;font-size:15px;font-weight:bold;line-height:20px;color:#111">中</div>
<svg style="left:1772px;top:937px" width="14" height="22"><circle cx="7" cy="4" r="2" fill="none" stroke="#222" stroke-width="1.500"/><circle cx="7" cy="13" r="2.500" fill="#222"/><path d="M8 14l-2 4" stroke="#222" stroke-width="1.500"/></svg>
<svg style="left:1797px;top:939px" width="18" height="17"><rect x="1" y="1" width="15" height="14" rx="2" fill="none" stroke="#222" stroke-width="1.500"/><path d="M4 5h9M4 8h9M5 11h7" stroke="#222" stroke-dasharray="1.500 1"/></svg>
<svg style="left:1829px;top:938px" width="20" height="20"><path d="M1 4l5-2q3 2 6 0l3 2-2 4v7q-5 3-9 0V8H2z" fill="#9060e0"/><path d="M4 8q4 8 9 2v5q-5 3-9 0z" fill="#48a8f0"/><circle cx="16" cy="3" r="2.800" fill="#f05030"/></svg>
<svg style="left:1860px;top:939px" width="18" height="18" fill="none" stroke="#222" stroke-width="1.500"><rect x="1" y="1" width="6" height="6"/><circle cx="13" cy="4" r="3"/><rect x="1" y="10" width="6" height="6"/><rect x="10" y="10" width="6" height="6"/></svg>
<svg style="left:1888px;top:937px" width="24" height="22"><circle cx="11" cy="11" r="10" fill="#f4f0ea"/><path d="M4 9l13-4 1 7-10 4z" fill="#ee6a20"/><circle cx="8" cy="11" r="1.200" fill="#111"/><circle cx="12" cy="10" r="1.200" fill="#111"/><circle cx="20" cy="4" r="2" fill="#f5d840"/></svg>
</body></html>
